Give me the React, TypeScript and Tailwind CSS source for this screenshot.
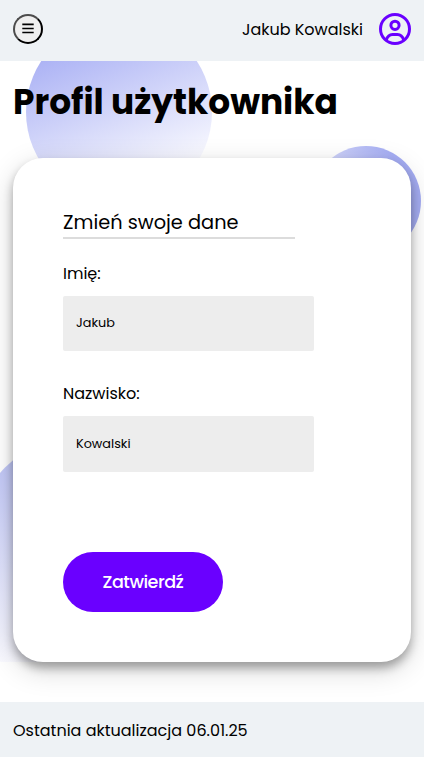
import React from "react";

function Backdrop() {
  return (
    <svg className="absolute left-0 top-0 -z-10" width="424" height="601" viewBox="0 61 424 601" aria-hidden="true">
      <defs>
        <linearGradient id="top" x1="0.22" y1="0.1" x2="0.58" y2="0.95">
          <stop offset="0" stopColor="#a7aef4" />
          <stop offset="1" stopColor="#fdfdff" />
        </linearGradient>
        <linearGradient id="right" x1="0.8" y1="0.3" x2="0.1" y2="0.5">
          <stop offset="0" stopColor="#a5adf3" />
          <stop offset="1" stopColor="#dde0fb" />
        </linearGradient>
        <linearGradient id="left" x1="0" y1="461" x2="0" y2="662" gradientUnits="userSpaceOnUse">
          <stop offset="0" stopColor="#c0c6f6" />
          <stop offset="1" stopColor="#f9f9ff" />
        </linearGradient>
      </defs>
      <circle cx="119" cy="112" r="93" fill="url(#top)" />
      <circle cx="366" cy="201" r="55" fill="url(#right)" />
      <circle cx="105" cy="567" r="141" fill="url(#left)" />
    </svg>
  );
}

function UserIcon() {
  return (
    <svg className="size-8" viewBox="0 0 32 32" fill="none" stroke="#6a00ff" strokeWidth="3" aria-hidden="true">
      <circle cx="16" cy="16" r="14.5" />
      <circle cx="16" cy="12.3" r="4.1" />
      <path d="M7.2 27.2C8.4 23.5 10.4 21.5 13.5 21.5h5c3.1 0 5.1 2 6.3 5.7" />
    </svg>
  );
}

function Field({ label, value, className, inputClass }: { label: string; value: string; className: string; inputClass: string }) {
  return (
    <label className={className}>
      <span className="block h-6 text-base leading-6">{label}</span>
      <input
        className={`block w-[251px] rounded-[2px] bg-[#ededed] px-[13px] text-[12.8px] outline-none ${inputClass}`}
        defaultValue={value}
      />
    </label>
  );
}

export default function App() {
  return (
    <div className="flex h-[757px] w-full flex-col overflow-hidden bg-white font-[Poppins,Inter,sans-serif] text-black">
      <header className="relative z-10 flex h-[61px] shrink-0 items-center justify-between bg-[#eef2f5] px-[13px] pb-[3px]">
        <button className="flex size-[30px] items-center justify-center rounded-full border-2 border-b-black border-l-[#4c4c4c] border-r-black border-t-[#4c4c4c] bg-[#efefef] pb-px" aria-label="Menu">
          <svg className="h-[11px] w-3" viewBox="0 0 12 11" stroke="#000" strokeWidth="1.7">
            <path d="M.3 1.3h11.4M.3 5.5h11.4M.3 9.5h11.4" />
          </svg>
        </button>
        <div className="flex items-center gap-4">
          <span className="pt-0.5 text-base">Jakub Kowalski</span>
          <UserIcon />
        </div>
      </header>
      <main className="relative isolate flex grow flex-col px-[13px]">
        <Backdrop />
        <h1 className="mt-[15px] h-[54px] whitespace-nowrap text-[34.4px] font-bold leading-[52px]">Profil użytkownika</h1>
        <section className="mt-7 h-[504px] rounded-[30px] bg-white pl-[50px] pt-[50px] shadow-[0_6px_10px_rgba(0,0,0,0.3),0_8px_28px_rgba(0,0,0,0.17)]">
          <h2 className="h-[31px] w-[232px] border-b-2 border-[#dcdcdc] text-[19.35px] leading-[29px]">Zmień swoje dane</h2>
          <Field label="Imię:" value="Jakub" className="mt-[23px] block" inputClass="mt-[10px] h-[55px] pb-px" />
          <Field label="Nazwisko:" value="Kowalski" className="mt-[31px] block" inputClass="mt-[10px] h-14" />
          <button className="mt-20 h-[60px] w-40 rounded-full bg-[#6a00ff] text-[17.6px] font-medium tracking-[-0.5px] text-white">Zatwierdź</button>
        </section>
      </main>
      <footer className="relative z-10 flex h-[55px] shrink-0 items-center bg-[#eef2f5] px-[13px] pt-0.5 text-base">Ostatnia aktualizacja 06.01.25</footer>
    </div>
  );
}
